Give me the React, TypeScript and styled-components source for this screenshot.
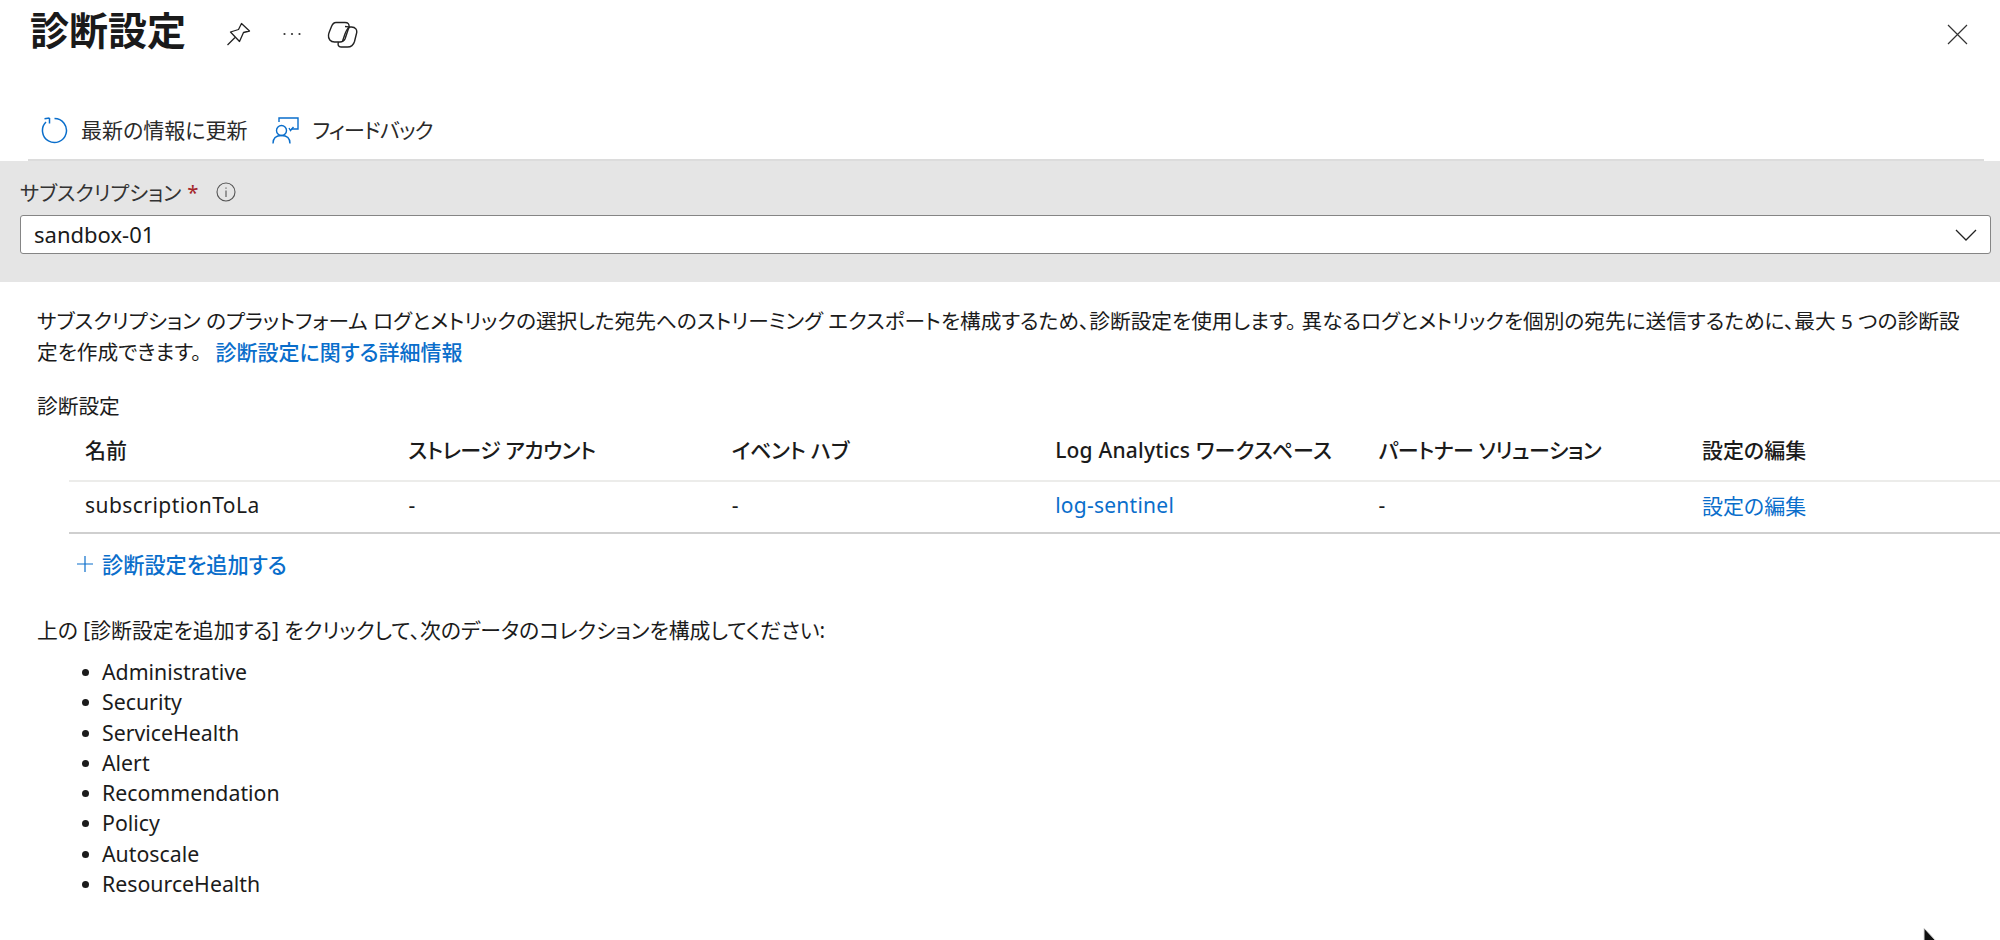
import styled, { createGlobalStyle } from 'styled-components';

const ACCENT = '#0a6ecb';
const FONT = '"Noto Sans", "Noto Sans CJK JP", sans-serif';

const GlobalStyle = createGlobalStyle`
  html, body {
    margin: 0;
    padding: 0;
    background: #fff;
  }
  body {
    font-family: ${FONT};
    color: #1b1b1b;
    font-feature-settings: "palt";
  }
`;

const columns = [
  { name: 'ストレージ アカウント', spacing: -0.5 },
  { name: 'イベント ハブ', spacing: -0.2 },
  { name: 'Log Analytics ワークスペース', spacing: 0.2 },
  { name: 'パートナー ソリューション', spacing: -0.5 },
  { name: '設定の編集', spacing: 0 },
];

const logTypes = [
  'Administrative',
  'Security',
  'ServiceHealth',
  'Alert',
  'Recommendation',
  'Policy',
  'Autoscale',
  'ResourceHealth',
];

const App = () => {
  return (
    <Page>
      <GlobalStyle />
      <TitleBar>
        <Title>診断設定</Title>
        <TitleIcons>
          <svg width="24" height="24" viewBox="0 0 24 24" fill="none" stroke="#222" strokeWidth="1.3" strokeLinejoin="round">
            <path d="M14.500 1.500 22.500 9 16.500 10.500 12.500 19.500 3.500 10 11.500 7.500Z" />
            <path d="M0.500 23 8 15.500" />
          </svg>
          <Dots width="18" height="4" viewBox="0 0 18 4" fill="#333">
            <circle cx="1.500" cy="2" r="1.100" />
            <circle cx="9" cy="2" r="1.100" />
            <circle cx="16.500" cy="2" r="1.100" />
          </Dots>
          <svg width="31" height="27" viewBox="0 0 31 27" fill="none" stroke="#222" strokeWidth="1.400" strokeLinejoin="round">
            <path d="M9 1.500h9c3 0 4.500 1.500 4 4.500l-4 12c-1 2-3 3-5 3H7.500C3.500 21 1 18 1.500 14c.2-1.500 .6-2.500 1-3.500l2-5C5.500 3 7 1.500 9 1.500Z" />
            <path d="M18 5.500c2.500 0 4 .5 5 .5h1.500c4 0 6 3 5 6.500l-2 8c-1 3.500-3.500 5.500-7 5.500H14c-2.500 0-3.500-2-2.500-5" />
            <path d="M15.500 20c1.500-3 2-7 4-10.500 .8-1.500 2-3 3.500-3.500" />
          </svg>
        </TitleIcons>
        <CloseButton>
          <svg width="21" height="21" viewBox="0 0 21 21" stroke="#333" strokeWidth="1.200" fill="none">
            <path d="M1 1 20 20M20 1 1 20" />
          </svg>
        </CloseButton>
      </TitleBar>

      <Toolbar>
        <ToolButton>
          <svg width="27" height="27" viewBox="0 0 27 27" fill="none" stroke={ACCENT} strokeWidth="1.500">
            <path d="M13.500 1.500A12 12 0 1 1 5 5" />
            <path d="M3.500 1.700 8.500 1M8.500 1 8.500 6.500" />
          </svg>
          <ToolLabel>最新の情報に更新</ToolLabel>
        </ToolButton>
        <ToolButton>
          <svg width="27" height="27" viewBox="0 0 27 27" fill="none" stroke={ACCENT} strokeWidth="1.400">
            <path d="M7 5V1h19v11h-6.500" />
            <path d="M21.500 10 18.500 13.500 17 11" />
            <circle cx="9.500" cy="13.500" r="5" />
            <path d="M1 26.500c0-5 3-8 8.500-8s8.500 3 8.500 8" />
          </svg>
          <FeedbackLabel>フィードバック</FeedbackLabel>
        </ToolButton>
      </Toolbar>

      <FilterBand>
        <FieldLabel>
          サブスクリプション <Required>*</Required>
          <svg width="20" height="20" viewBox="0 0 20 20" fill="none" stroke="#555" strokeWidth="1.100">
            <circle cx="10" cy="10" r="9" />
            <path d="M10 8.500V15M10 5.500V6.800" />
          </svg>
        </FieldLabel>
        <Select>
          <SelectValue>sandbox-01</SelectValue>
          <svg width="22" height="12" viewBox="0 0 22 12" fill="none" stroke="#222" strokeWidth="1.300">
            <path d="M1 1 11 11 21 1" />
          </svg>
        </Select>
      </FilterBand>

      <Content>
        <Description>
          サブスクリプション のプラットフォーム ログとメトリックの選択した宛先へのストリーミング エクスポートを構成するため、診断設定を使用します。 異なるログとメトリックを個別の宛先に送信するために、最大 5 つの診断設定を作成できます。
          <DetailLink>診断設定に関する詳細情報</DetailLink>
        </Description>
        <SectionLabel>診断設定</SectionLabel>
      </Content>

      <SettingsTable>
        <HeaderRow>
          <Cell>名前</Cell>
          {columns.map((column) => (
            <Cell key={column.name} $spacing={column.spacing}>
              {column.name}
            </Cell>
          ))}
        </HeaderRow>
        <DataRow>
          <Cell $spacing={0.45}>subscriptionToLa</Cell>
          <Cell>-</Cell>
          <Cell>-</Cell>
          <Cell $spacing={0.25}>
            <RowLink>log-sentinel</RowLink>
          </Cell>
          <Cell>-</Cell>
          <Cell>
            <RowLink>設定の編集</RowLink>
          </Cell>
        </DataRow>
      </SettingsTable>

      <AddRow>
        <svg width="16" height="16" viewBox="0 0 16 16" stroke={ACCENT} strokeWidth="1.200">
          <path d="M8 0V16M0 8H16" />
        </svg>
        <TextLink>診断設定を追加する</TextLink>
      </AddRow>

      <Content>
        <Instruction>上の [診断設定を追加する] をクリックして、次のデータのコレクションを構成してください:</Instruction>
        <LogList>
          {logTypes.map((type) => (
            <li key={type}>{type}</li>
          ))}
        </LogList>
      </Content>

      <Cursor>
        <svg width="18" height="14" viewBox="0 0 18 14">
          <path d="M1 0V14H14Z" fill="#111" stroke="#ddd" strokeWidth="1" />
        </svg>
      </Cursor>
    </Page>
  );
};

const Page = styled.div`
  position: relative;
  width: 2000px;
  height: 940px;
  overflow: hidden;
`;

const TitleBar = styled.div`
  display: flex;
  align-items: center;
  height: 68px;
  padding-left: 30px;
`;

const Title = styled.h1`
  margin: 0;
  padding-bottom: 8px;
  font-size: 39px;
  line-height: 56px;
  font-weight: 700;
  color: #1a1a1a;
  font-feature-settings: normal;
`;

const TitleIcons = styled.div`
  display: flex;
  align-items: center;
  gap: 32px;
  margin-left: 41px;
`;

const Dots = styled.svg`
  margin-right: -6px;
`;

const CloseButton = styled.div`
  display: flex;
  margin-left: auto;
  margin-right: 32px;
`;

const Toolbar = styled.div`
  display: flex;
  align-items: center;
  gap: 25px;
  height: 93px;
  margin: 0 16px 0 28px;
  padding: 33px 0 0 13px;
  border-bottom: 2px solid #dcdcdc;
  box-sizing: border-box;
`;

const ToolButton = styled.div`
  display: flex;
  align-items: center;
  gap: 13px;
  font-size: 21px;
  color: #2a2a2a;
`;

const ToolLabel = styled.span`
  margin-top: -2px;
`;

const FeedbackLabel = styled(ToolLabel)`
  letter-spacing: -0.8px;
`;

const FilterBand = styled.div`
  height: 121px;
  padding: 16px 9px 0 20px;
  background: #e5e5e5;
  box-sizing: border-box;
`;

const FieldLabel = styled.label`
  display: flex;
  align-items: center;
  height: 30px;
  font-size: 20.400px;
  color: #333;
  svg {
    margin-left: 17px;
  }
`;

const Required = styled.span`
  margin-left: 6px;
  color: #a4262c;
`;

const Select = styled.div`
  display: flex;
  align-items: center;
  justify-content: space-between;
  height: 39px;
  margin-top: 8px;
  padding: 0 13px;
  background: #fff;
  border: 1px solid #858585;
  border-radius: 3px;
  font-size: 22px;
  box-sizing: border-box;
  color: #1a1a1a;
`;

const SelectValue = styled.span`
  margin-top: -2px;
`;

const Content = styled.div`
  padding: 0 25px 0 37px;
`;

const Description = styled.p`
  width: 1932px;
  margin: 24px 0 0;
  font-size: 20.700px;
  line-height: 31px;
`;

const TextLink = styled.a`
  color: ${ACCENT};
  font-weight: 500;
  font-size: 21.200px;
`;

const DetailLink = styled(TextLink)`
  margin-left: 14px;
  font-size: 21px;
`;

const RowLink = styled.a`
  color: ${ACCENT};
`;

const SectionLabel = styled.div`
  margin-top: 22.500px;
  font-size: 20.700px;
  line-height: 31px;
`;

const SettingsTable = styled.div`
  margin-left: 69px;
`;

const rowColumns = 'repeat(5, 323.400px) 1fr';

const HeaderRow = styled.div`
  display: grid;
  grid-template-columns: ${rowColumns};
  align-items: center;
  height: 60px;
  padding-bottom: 4px;
  box-sizing: border-box;
  font-weight: 500;
  border-bottom: 2px solid #ececea;
`;

const DataRow = styled.div`
  display: grid;
  grid-template-columns: ${rowColumns};
  align-items: center;
  height: 52px;
  padding-bottom: 3px;
  box-sizing: border-box;
  border-bottom: 2px solid #cfcfcf;
`;

const Cell = styled.div<{ $spacing?: number }>`
  padding-left: 16px;
  font-size: 21px;
  letter-spacing: ${(p) => p.$spacing ?? 0}px;
  white-space: nowrap;
`;

const AddRow = styled.div`
  display: flex;
  align-items: center;
  gap: 9px;
  height: 32px;
  margin: 14px 0 0 77px;
`;

const Instruction = styled.p`
  margin: 35px 0 0;
  font-size: 20.850px;
  line-height: 31px;
`;

const LogList = styled.ul`
  list-style: none;
  margin: 11.500px 0 0;
  padding: 0 0 0 65px;
  li {
    position: relative;
    height: 30.300px;
    line-height: 30.300px;
    font-size: 21.300px;
  }
  li::before {
    content: '';
    position: absolute;
    left: -20px;
    top: 12px;
    width: 7px;
    height: 7px;
    border-radius: 50%;
    background: #1b1b1b;
  }
`;

const Cursor = styled.div`
  position: absolute;
  left: 1923px;
  top: 928px;
  line-height: 0;
`;

export default App;
